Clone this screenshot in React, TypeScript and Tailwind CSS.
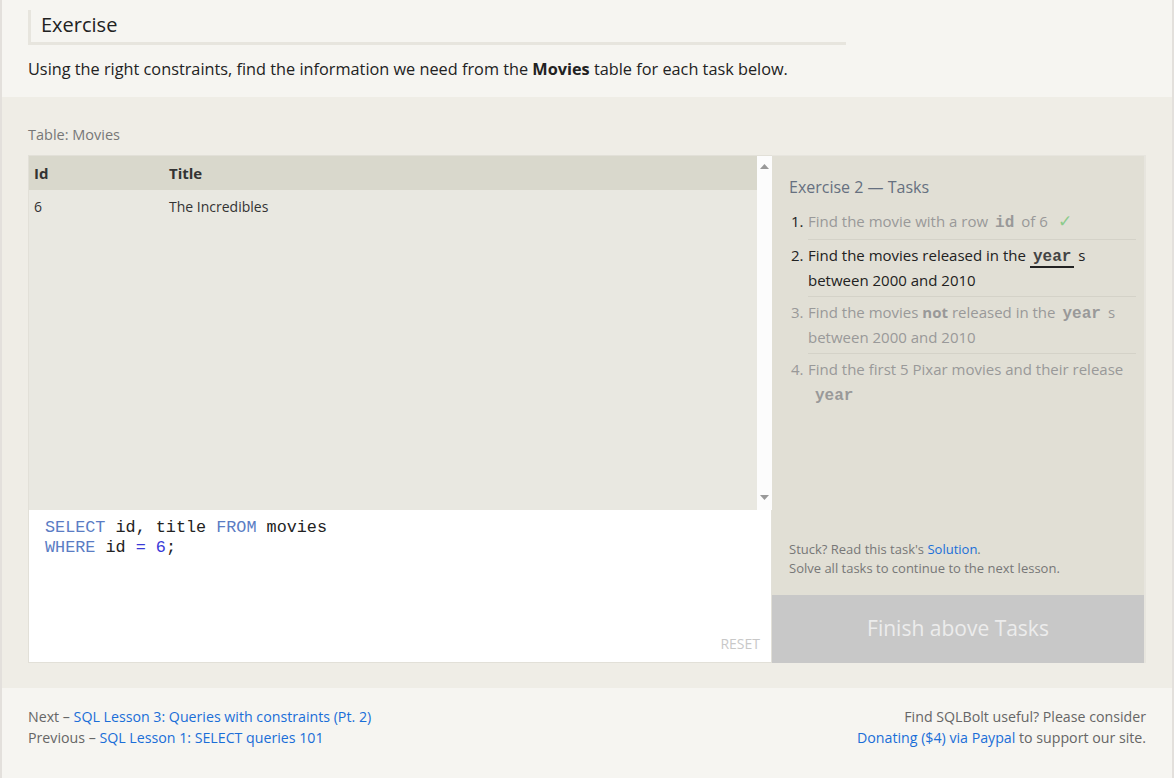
import React from "react";

const mono = "font-['Liberation_Mono',monospace]";

function TaskCode({ children, active }: { children: React.ReactNode; active?: boolean }) {
    return (
        <span className={`${mono} mx-[4px] px-[3px] text-[16px] leading-none font-bold ${active ? "border-b-[2px] border-[#222] text-[#444]" : "text-[#999]"}`}>
            {children}
        </span>
    );
}

export default function App() {
    return (
        <div className="min-h-[778px] border-x-2 border-[#e3e0dc] bg-[#f6f5f1] font-['Open_Sans',sans-serif] text-[#222]">
            {/* intro */}
            <section className="h-[97px] px-[26px] pt-[10px]">
                <div className="w-[818px] border-b-[3px] border-l-[3px] border-[#e7e5de] pb-[2px] pl-[10px] text-[20px] leading-[30px] text-[#222]">
                    Exercise
                </div>
                <p className="mt-[12px] text-[16.3px] leading-[24px]">
                    Using the right constraints, find the information we need from the <b>Movies</b> table for each task below.
                </p>
            </section>

            {/* exercise */}
            <section className="bg-[#efede6] px-[26px] pt-[28px] pb-[25px]">
                <div className="text-[14.5px] leading-[20px] text-[#777]">Table: Movies</div>
                <div className="mt-[10px] flex">
                    <div className="flex w-[744px] flex-col">
                        <div className="flex h-[355px] border-t border-l border-[#e2e0d8] bg-[#e9e8e1]">
                            <div className="flex-1">
                                <div className="flex h-[34px] items-center bg-[#d9d8cc] text-[15px] font-bold text-[#333]">
                                    <div className="w-[140px] pl-[5px]">Id</div>
                                    <div>Title</div>
                                </div>
                                <div className="flex h-[32px] items-center text-[14px] text-[#333]">
                                    <div className="w-[140px] pl-[5px]">6</div>
                                    <div>The Incredibles</div>
                                </div>
                            </div>
                            <div className="flex w-[15px] flex-col items-center justify-between bg-[#fcfcfc] pt-[8px] pb-[10px]">
                                <svg width="9" height="5" viewBox="0 0 9 5"><path d="M4.5 0L9 5H0z" fill="#999" /></svg>
                                <svg width="9" height="5" viewBox="0 0 9 5"><path d="M0 0h9L4.5 5z" fill="#999" /></svg>
                            </div>
                        </div>
                        <div className="flex h-[153px] flex-col border-x border-b border-[#e2e0d8] bg-white pt-[8px] pl-[16px] pr-[11px]">
                            <pre className={`${mono} flex-1 text-[16.8px] leading-[20px] text-[#222]`}>
                                <span className="text-[#5a7cc4]">SELECT</span> id, title <span className="text-[#5a7cc4]">FROM</span> movies{"\n"}
                                <span className="text-[#5a7cc4]">WHERE</span> id <span className="text-[#3a3ad8]">=</span> <span className="text-[#3a3ad8]">6</span>;
                            </pre>
                            <div className="self-end pb-[9px] text-[14px] leading-[18px] text-[#c8c8c8]">RESET</div>
                        </div>
                    </div>

                    <div className="flex w-[374px] flex-col border-t border-r-2 border-[#e7e5de] bg-[#e1dfd5]">
                        <div className="flex-1 pt-[20px] pr-[8px] pl-[17px]">
                            <div className="text-[16px] leading-[22px] text-[#667080]">Exercise 2 — Tasks</div>
                            <ol className="mt-[8px] text-[15px] leading-[25px]">
                                <li className="flex">
                                    <span className="w-[19px] shrink-0 pt-[3px] pl-[2px] text-[#222]">1.</span>
                                    <span className="flex-1 border-b border-[#d4d2c8] pt-[3px] pb-[5px] text-[#999]">
                                        Find the movie with a row<TaskCode>id</TaskCode>of 6 <span className="ml-[6px] text-[17px] leading-none text-[#8ccb8c]">✓</span>
                                    </span>
                                </li>
                                <li className="flex">
                                    <span className="w-[19px] shrink-0 pt-[3px] pl-[2px] text-[#222]">2.</span>
                                    <span className="flex-1 border-b border-[#d4d2c8] pt-[3px] pb-[3px] text-[#222]">
                                        Find the movies released in the<TaskCode active>year</TaskCode>s between 2000 and 2010
                                    </span>
                                </li>
                                <li className="flex">
                                    <span className="w-[19px] shrink-0 pt-[3px] pl-[2px] text-[#999]">3.</span>
                                    <span className="flex-1 border-b border-[#d4d2c8] pt-[3px] pb-[3px] text-[#999]">
                                        Find the movies <b>not</b> released in the<TaskCode>year</TaskCode>s between 2000 and 2010
                                    </span>
                                </li>
                                <li className="flex">
                                    <span className="w-[19px] shrink-0 pt-[3px] pl-[2px] text-[#999]">4.</span>
                                    <span className="flex-1 pt-[3px] text-[#999]">
                                        Find the first 5 Pixar movies and their release <TaskCode>year</TaskCode>
                                    </span>
                                </li>
                            </ol>
                        </div>
                        <div className="pb-[17px] pl-[17px] text-[13px] leading-[19px] text-[#777]">
                            Stuck? Read this task's <a className="text-[#1a6ed8]">Solution</a>.<br />
                            Solve all tasks to continue to the next lesson.
                        </div>
                        <div className="flex h-[68px] items-center justify-center bg-[#c8c8c8] text-[21px] text-[#ececec]">
                            Finish above Tasks
                        </div>
                    </div>
                </div>
            </section>

            {/* footer */}
            <footer className="flex justify-between px-[26px] pt-[18px] text-[14.2px] leading-[21px] text-[#666]">
                <div>
                    <div>Next – <a className="text-[#1a6ed8]">SQL Lesson 3: Queries with constraints (Pt. 2)</a></div>
                    <div>Previous – <a className="text-[#1a6ed8]">SQL Lesson 1: SELECT queries 101</a></div>
                </div>
                <div className="text-right">
                    <div>Find SQLBolt useful? Please consider</div>
                    <div><a className="text-[#1a6ed8]">Donating ($4) via Paypal</a> to support our site.</div>
                </div>
            </footer>
        </div>
    );
}
